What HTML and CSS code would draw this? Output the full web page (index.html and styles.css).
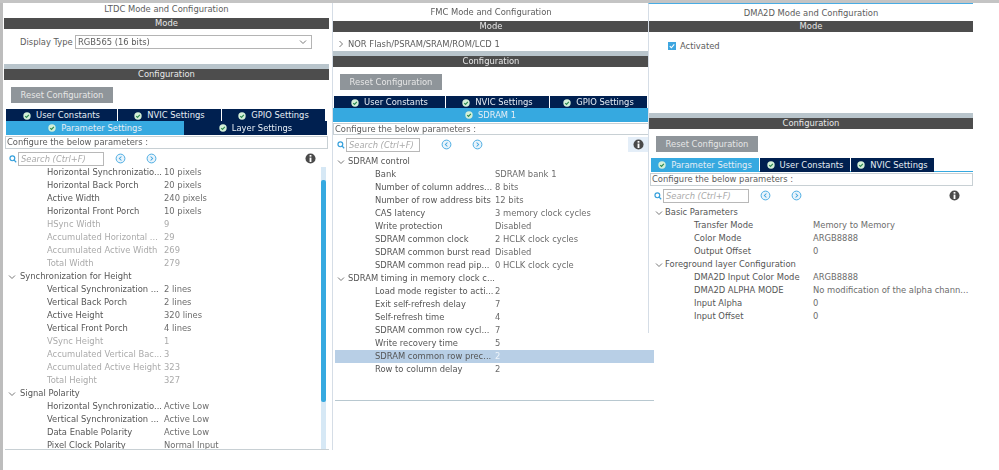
FILE: index.html
```html
<!DOCTYPE html>
<html lang="en">
<head>
<meta charset="utf-8">
<title>STM32CubeMX configuration panels</title>
<link rel="stylesheet" href="styles.css">
</head>
<body>
<svg class="defs" width="0" height="0" aria-hidden="true">
  <symbol id="ok" viewBox="0 0 10 10"><circle cx="5" cy="5" r="4.6" fill="#d4f0d8"/><path d="M2.8 5.1 4.4 6.7 7.3 3.6" fill="none" stroke="#2c8a50" stroke-width="1.5"/></symbol>
  <symbol id="mag" viewBox="0 0 10 10"><circle cx="4.2" cy="4.2" r="3" fill="none" stroke="#36a0dc" stroke-width="1.5"/><path d="M6.4 6.4 9 9" stroke="#36a0dc" stroke-width="1.6"/></symbol>
  <symbol id="prev" viewBox="0 0 12 12"><circle cx="6" cy="6" r="4.8" fill="#eaf4fb" stroke="#3ea6e0" stroke-width="1"/><path d="M7 3.8 4.8 6 7 8.2" fill="none" stroke="#3ea6e0" stroke-width="1.1"/></symbol>
  <symbol id="next" viewBox="0 0 12 12"><circle cx="6" cy="6" r="4.8" fill="#eaf4fb" stroke="#3ea6e0" stroke-width="1"/><path d="M5 3.8 7.2 6 5 8.2" fill="none" stroke="#3ea6e0" stroke-width="1.1"/></symbol>
  <symbol id="info" viewBox="0 0 12 12"><circle cx="6" cy="6" r="5.5" fill="#4a4a4a"/><rect x="5" y="2.2" width="2" height="1.8" fill="#fff"/><rect x="5" y="5" width="2" height="4.8" fill="#fff"/></symbol>
  <symbol id="down" viewBox="0 0 8 8"><path d="M1 2.5 4 5.5 7 2.5" fill="none" stroke="#777" stroke-width="1"/></symbol>
  <symbol id="right" viewBox="0 0 8 8"><path d="M2.5 1 5.5 4 2.5 7" fill="none" stroke="#777" stroke-width="1"/></symbol>
</svg>

<main class="desk">

<section class="panel p1">
  <h2 class="title">LTDC Mode and Configuration</h2>
  <div class="bar">Mode</div>
  <div class="mode m1">
    <span class="field-label">Display Type</span>
    <span class="select">RGB565 (16 bits)<svg class="sel-arrow"><use href="#down"/></svg></span>
  </div>
  <div class="strip"></div>
  <div class="bar">Configuration</div>
  <div class="btn">Reset Configuration</div>
  <div class="tabs t1a">
    <div class="tab"><svg class="ok"><use href="#ok"/></svg>User Constants</div>
    <div class="tab"><svg class="ok"><use href="#ok"/></svg>NVIC Settings</div>
    <div class="tab"><svg class="ok"><use href="#ok"/></svg>GPIO Settings</div>
  </div>
  <div class="tabs t1b">
    <div class="tab on"><svg class="ok"><use href="#ok"/></svg>Parameter Settings</div>
    <div class="tab"><svg class="ok"><use href="#ok"/></svg>Layer Settings</div>
  </div>
  <div class="confbox">Configure the below parameters :</div>
  <div class="search">
    <svg class="mag"><use href="#mag"/></svg>
    <span class="input">Search (Ctrl+F)</span>
    <svg class="nav"><use href="#prev"/></svg>
    <svg class="nav"><use href="#next"/></svg>
    <span class="info-wrap"><svg class="info"><use href="#info"/></svg></span>
  </div>
  <div class="table tb1">
    <div class="rows">
      <div class="row"><span class="n">Horizontal Synchronizatio...</span><span class="v">10 pixels</span></div>
      <div class="row"><span class="n">Horizontal Back Porch</span><span class="v">20 pixels</span></div>
      <div class="row"><span class="n">Active Width</span><span class="v">240 pixels</span></div>
      <div class="row"><span class="n">Horizontal Front Porch</span><span class="v">10 pixels</span></div>
      <div class="row dim"><span class="n">HSync Width</span><span class="v">9</span></div>
      <div class="row dim"><span class="n">Accumulated Horizontal ...</span><span class="v">29</span></div>
      <div class="row dim"><span class="n">Accumulated Active Width</span><span class="v">269</span></div>
      <div class="row dim"><span class="n">Total Width</span><span class="v">279</span></div>
      <div class="group"><svg class="chev"><use href="#down"/></svg>Synchronization for Height</div>
      <div class="row"><span class="n">Vertical Synchronization ...</span><span class="v">2 lines</span></div>
      <div class="row"><span class="n">Vertical Back Porch</span><span class="v">2 lines</span></div>
      <div class="row"><span class="n">Active Height</span><span class="v">320 lines</span></div>
      <div class="row"><span class="n">Vertical Front Porch</span><span class="v">4 lines</span></div>
      <div class="row dim"><span class="n">VSync Height</span><span class="v">1</span></div>
      <div class="row dim"><span class="n">Accumulated Vertical Bac...</span><span class="v">3</span></div>
      <div class="row dim"><span class="n">Accumulated Active Height</span><span class="v">323</span></div>
      <div class="row dim"><span class="n">Total Height</span><span class="v">327</span></div>
      <div class="group"><svg class="chev"><use href="#down"/></svg>Signal Polarity</div>
      <div class="row"><span class="n">Horizontal Synchronizatio...</span><span class="v">Active Low</span></div>
      <div class="row"><span class="n">Vertical Synchronization ...</span><span class="v">Active Low</span></div>
      <div class="row"><span class="n">Data Enable Polarity</span><span class="v">Active Low</span></div>
      <div class="row"><span class="n">Pixel Clock Polarity</span><span class="v">Normal Input</span></div>
    </div>
    <div class="scroll"><div class="thumb"></div></div>
  </div>
</section>

<section class="panel p2">
  <h2 class="title">FMC Mode and Configuration</h2>
  <div class="bar">Mode</div>
  <div class="mode m2"><svg class="chev"><use href="#right"/></svg>NOR Flash/PSRAM/SRAM/ROM/LCD 1</div>
  <div class="strip"></div>
  <div class="bar">Configuration</div>
  <div class="btn">Reset Configuration</div>
  <div class="tabs t2a">
    <div class="tab"><svg class="ok"><use href="#ok"/></svg>User Constants</div>
    <div class="tab"><svg class="ok"><use href="#ok"/></svg>NVIC Settings</div>
    <div class="tab"><svg class="ok"><use href="#ok"/></svg>GPIO Settings</div>
  </div>
  <div class="tabs t2b">
    <div class="tab on"><svg class="ok"><use href="#ok"/></svg>SDRAM 1</div>
  </div>
  <div class="confbox">Configure the below parameters :</div>
  <div class="search">
    <svg class="mag"><use href="#mag"/></svg>
    <span class="input">Search (Ctrl+F)</span>
    <svg class="nav"><use href="#prev"/></svg>
    <svg class="nav"><use href="#next"/></svg>
    <span class="info-wrap"><svg class="info"><use href="#info"/></svg></span>
  </div>
  <div class="table tb2">
    <div class="rows">
      <div class="group"><svg class="chev"><use href="#down"/></svg>SDRAM control</div>
      <div class="row"><span class="n">Bank</span><span class="v">SDRAM bank 1</span></div>
      <div class="row"><span class="n">Number of column addres...</span><span class="v">8 bits</span></div>
      <div class="row"><span class="n">Number of row address bits</span><span class="v">12 bits</span></div>
      <div class="row"><span class="n">CAS latency</span><span class="v">3 memory clock cycles</span></div>
      <div class="row"><span class="n">Write protection</span><span class="v">Disabled</span></div>
      <div class="row"><span class="n">SDRAM common clock</span><span class="v">2 HCLK clock cycles</span></div>
      <div class="row"><span class="n">SDRAM common burst read</span><span class="v">Disabled</span></div>
      <div class="row"><span class="n">SDRAM common read pip...</span><span class="v">0 HCLK clock cycle</span></div>
      <div class="group"><svg class="chev"><use href="#down"/></svg>SDRAM timing in memory clock c...</div>
      <div class="row"><span class="n">Load mode register to acti...</span><span class="v">2</span></div>
      <div class="row"><span class="n">Exit self-refresh delay</span><span class="v">7</span></div>
      <div class="row"><span class="n">Self-refresh time</span><span class="v">4</span></div>
      <div class="row"><span class="n">SDRAM common row cycl...</span><span class="v">7</span></div>
      <div class="row"><span class="n">Write recovery time</span><span class="v">5</span></div>
      <div class="row sel"><span class="n">SDRAM common row prec...</span><span class="v">2</span></div>
      <div class="row"><span class="n">Row to column delay</span><span class="v">2</span></div>
    </div>
  </div>
</section>

<section class="panel p3">
  <h2 class="title">DMA2D Mode and Configuration</h2>
  <div class="bar">Mode</div>
  <div class="mode m3"><span class="check"><svg viewBox="0 0 10 10"><path d="M2.2 5.2 4.2 7.2 7.8 3" fill="none" stroke="#fff" stroke-width="1.4"/></svg></span>Activated</div>
  <div class="strip"></div>
  <div class="bar">Configuration</div>
  <div class="btn">Reset Configuration</div>
  <div class="tabs t3a">
    <div class="tab on"><svg class="ok"><use href="#ok"/></svg>Parameter Settings</div>
    <div class="tab"><svg class="ok"><use href="#ok"/></svg>User Constants</div>
    <div class="tab"><svg class="ok"><use href="#ok"/></svg>NVIC Settings</div>
  </div>
  <div class="confbox">Configure the below parameters :</div>
  <div class="search">
    <svg class="mag"><use href="#mag"/></svg>
    <span class="input">Search (Ctrl+F)</span>
    <svg class="nav"><use href="#prev"/></svg>
    <svg class="nav"><use href="#next"/></svg>
    <span class="info-wrap"><svg class="info"><use href="#info"/></svg></span>
  </div>
  <div class="table tb3">
    <div class="rows">
      <div class="group"><svg class="chev"><use href="#down"/></svg>Basic Parameters</div>
      <div class="row"><span class="n">Transfer Mode</span><span class="v">Memory to Memory</span></div>
      <div class="row"><span class="n">Color Mode</span><span class="v">ARGB8888</span></div>
      <div class="row"><span class="n">Output Offset</span><span class="v">0</span></div>
      <div class="group"><svg class="chev"><use href="#down"/></svg>Foreground layer Configuration</div>
      <div class="row"><span class="n">DMA2D Input Color Mode</span><span class="v">ARGB8888</span></div>
      <div class="row"><span class="n">DMA2D ALPHA MODE</span><span class="v">No modification of the alpha chann...</span></div>
      <div class="row"><span class="n">Input Alpha</span><span class="v">0</span></div>
      <div class="row"><span class="n">Input Offset</span><span class="v">0</span></div>
    </div>
  </div>
</section>

</main>
</body>
</html>
```
FILE: styles.css
```css
* { box-sizing: border-box; }
html, body { margin: 0; height: 470px; overflow: hidden; background: #fff; }
body { border-top: 3px solid #c4c4c4; }
.defs { position: absolute; }

.desk {
  display: flex;
  align-items: flex-start;
  height: 467px;
  font: 8.4px/13px "DejaVu Sans", sans-serif;
  color: #5c5c5c;
  filter: blur(0.45px);
}

.panel { flex: none; background: #fff; }
.p1 { width: 331px; height: 467px; padding: 0 2px 0 1px; border-left: 3px solid #bdbdbd; }
.p2 { width: 322px; margin-left: 1px; height: 447px; border-left: 1px solid #d5dde6; padding-top: 2px; }
.p3 { width: 325px; margin-left: -6px; height: 330px; position: relative; border-left: 1px solid #d5dde6; border-top: 1px solid #48ace4; }

.title { margin: 0; font: inherit; height: 15px; line-height: 12px; text-align: center; color: #5c5c5c; }
.p2 .title { height: 16px; line-height: 15px; width: 316px; }
.p3 .title { height: 17px; line-height: 18px; }

.bar { height: 11px; line-height: 11px; background: #4d4d4d; color: #e8e8e8; text-align: center; }
.p2 .bar { width: 316px; }

.strip { height: 5px; background: #b9c5cc; }
.p2 .strip { width: 316px; }

.mode { display: flex; align-items: center; }
.m1 { height: 35px; padding: 6px 0 0 16px; align-items: flex-start; }
.m2 { height: 19px; width: 316px; padding: 5px 0 0 0; }
.m3 { height: 81px; padding: 8px 0 0 19px; align-items: flex-start; }

.field-label { width: 55px; line-height: 14px; flex: none; }
.select {
  position: relative;
  display: block;
  width: 237px; height: 14px;
  border: 1px solid #b4b4b4;
  padding-left: 2px;
  line-height: 12px;
}
.sel-arrow { position: absolute; right: 4px; top: 2px; width: 8px; height: 8px; }

.check { width: 8px; height: 8px; background: #3ea6e0; margin: 2px 4px 0 0; display: block; }
.check svg { display: block; width: 8px; height: 8px; }

.btn {
  width: 102px; height: 16px; line-height: 16px;
  margin: 7px 0 6px 7px;
  background: #8f959a;
  color: #e6e6e6;
  text-align: center;
}

.tabs { display: grid; column-gap: 1px; color: #e6eef5; }
.tab { display: flex; align-items: center; justify-content: center; background: #002050; white-space: nowrap; }
.tab.on { background: #36a9e0; }
.ok { width: 8px; height: 8px; margin-right: 5px; flex: none; }

.t1a { grid-template-columns: 111px 103px 103px; margin-left: 2px; height: 11px; line-height: 13px; }
.t1b { grid-template-columns: 178px 143px; column-gap: 0; margin: 1px 0 0 2px; height: 14px; line-height: 14px; border-bottom: 1px solid #36a9e0; width: 321px; }
.t2a { grid-template-columns: 111px 103px 97px; margin-left: 1px; height: 11px; line-height: 13px; }
.t2b { grid-template-columns: 315px; height: 14px; line-height: 14px; margin-top: 1px; }
.t3a { grid-template-columns: 108px 90px 83px; justify-content: start; margin-left: 2px; height: 14px; line-height: 14px; border-bottom: 1px solid #36a9e0; width: 322px; }

.confbox {
  height: 13px; line-height: 11px;
  border: 1px solid #c8d0d4;
  padding-left: 1px;
  margin: 1px 1px 0 1px;
}
.p1 .confbox { width: 323px; }
.p2 .confbox { width: 316px; height: 12px; line-height: 10px; margin: 1px 0 0 0; }
.p3 .confbox { width: 323px; }

.search { display: flex; align-items: center; height: 15px; margin-top: 2px; position: relative; }
.mag { width: 8px; height: 8px; margin-left: 5px; flex: none; }
.input {
  width: 86px; height: 14px; margin-left: 1px;
  border: 1px solid #b8b8b8;
  padding-left: 2px;
  line-height: 12px;
  font-style: italic;
  color: #aaa;
}
.nav { width: 11px; height: 11px; margin-left: 11px; flex: none; }
.nav + .nav { margin-left: 20px; }
.info-wrap { margin-left: 141px; width: 24px; height: 15px; display: flex; align-items: center; justify-content: center; }
.info { width: 11px; height: 11px; }
.p2 .search { width: 316px; }
.p2 .mag { margin-left: 4px; }
.p2 .nav { margin-left: 21px; }
.p2 .nav + .nav { margin-left: 20px; }
.p2 .info-wrap { margin-left: 145px; background: #e4eef8; }
.p3 .nav:first-of-type { margin-left: 13px; }
.p3 .nav + .nav { margin-left: 20px; }
.p3 .info-wrap { margin-left: 140px; }

.table { position: relative; overflow: hidden; }
.tb1 { height: 284px; border-bottom: 1px solid #c8d0d4; margin-left: 1px; width: 324px; }
.tb2 { height: 246px; margin-top: 3px; border-bottom: 1px solid #b8c8d0; margin-left: 2px; width: 319px; }
.tb3 { height: 124px; margin-top: 3px; margin-left: 2px; }

.row, .group { height: 13px; line-height: 13px; white-space: nowrap; display: flex; }
.row .n { width: 117px; margin-left: 42px; flex: none; color: #555; }
.row .v { color: #6c6c6c; }
.tb2 .row .n { width: 120px; margin-left: 40px; }
.tb3 .row .n { width: 119px; margin-left: 43px; }
.row.dim .n, .row.dim .v { color: #aaa; }
.row.sel { background: #b8cfe6; }
.row.sel .v { color: #eef4fa; }
.row.sel .n { color: #555; }
.group { color: #555; align-items: center; }
.chev { width: 8px; height: 8px; margin: 0 4px 0 3px; flex: none; }
.tb2 .chev { margin: 0 3px 0 2px; }
.m2 .chev { margin: 0 3px 0 4px; }
.tb3 .chev { margin: 0 2px 0 4px; }

.scroll { position: absolute; top: 1px; right: 3px; width: 5px; height: 282px; background: #d6e8f5; }
.thumb { margin-top: 13px; height: 222px; background: #36a9e0; border-radius: 2px; }
```
